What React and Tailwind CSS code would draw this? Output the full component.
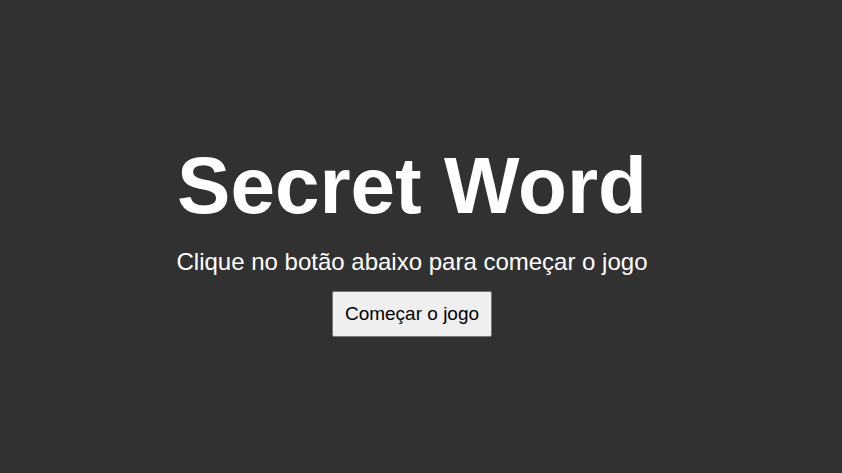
export default function App() {
  return (
    <main className="flex min-h-screen flex-col items-center justify-center bg-[#313131] pt-0.5 pr-[18px] font-['Liberation_Sans',Arial,sans-serif] text-white">
      <h1 className="text-[80px] leading-24 font-bold">Secret Word</h1>
      <p className="mt-3.5 text-2xl leading-7">Clique no botão abaixo para começar o jogo</p>
      <button
        type="button"
        className="mt-[15px] h-[46px] w-40 rounded-xs border border-[#767676] bg-[#efefef] text-[19px] text-black"
      >
        Começar o jogo
      </button>
    </main>
  );
}
